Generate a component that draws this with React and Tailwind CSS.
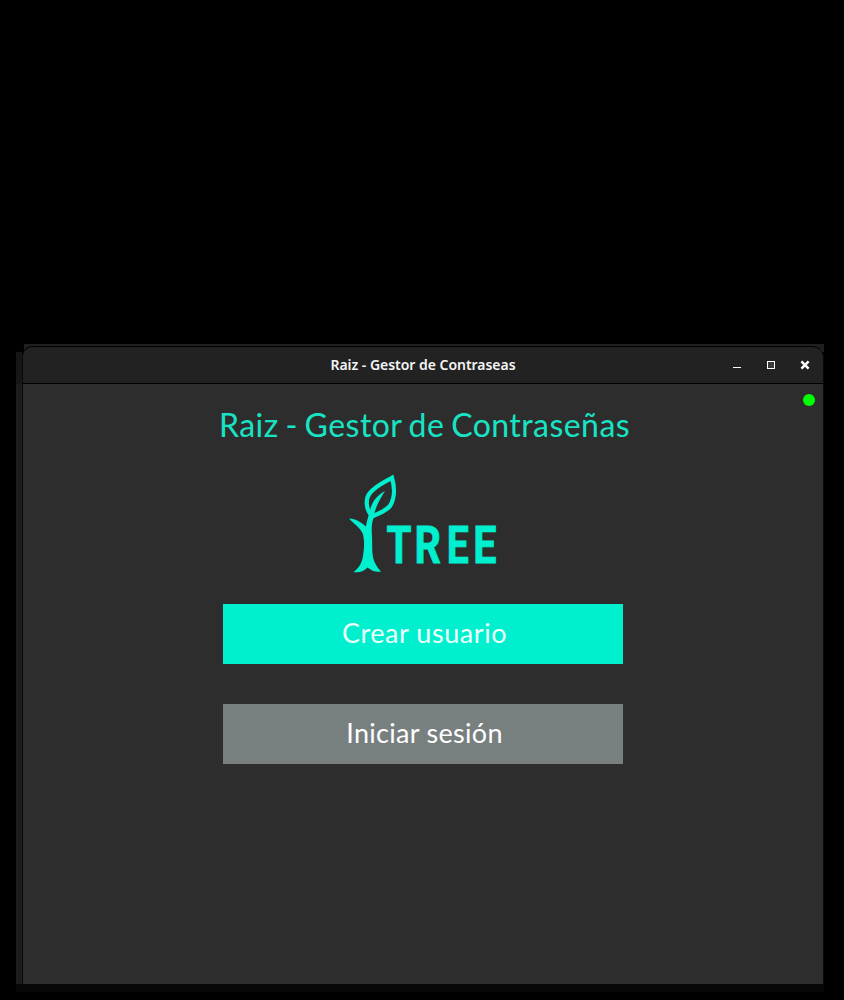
import React from "react";

function WindowControls() {
  return (
    <svg className="h-9 w-[88px] shrink-0" viewBox="0 0 88 36" shapeRendering="crispEdges" aria-hidden="true">
      <rect x="1" y="20" width="8" height="1" fill="#fff" />
      <rect x="35.5" y="14.5" width="7" height="7" fill="#3a3a3a" stroke="#fff" />
      <path d="M69.400 14.400L76.600 21.600M76.600 14.400L69.400 21.600" stroke="#fff" strokeWidth="2.5" shapeRendering="auto" />
    </svg>
  );
}

function TitleBar() {
  return (
    <header className="grid h-[38px] grid-cols-[1fr_auto_1fr] items-center rounded-t-[10px] border-y border-l border-y-black border-l-[#090909] bg-[#222222]">
      <span />
      <h1 className="whitespace-nowrap font-['Noto_Sans',sans-serif] text-[14px] font-semibold leading-9 tracking-[-0.03px] text-[#f4f4f4]">
        Raiz - Gestor de Contraseas
      </h1>
      <div className="flex justify-end pr-[3px]">
        <WindowControls />
      </div>
    </header>
  );
}

function TreeLogo() {
  return (
    <svg className="h-[115px] w-[170px]" viewBox="0 0 170 115" role="img" aria-label="Tree">
      <g fill="#00f0cf">
        <path d="M9 53.500C16 53.500 21 57.500 26 61.500C26.500 57 28 53 29 49L34.500 51C31.500 57 31.500 63 32 71C32.500 83 31.500 91 35 98C36.500 101 38.500 104 41 106.500C36 107.500 32 106 27.500 102.500C24 106 20 108 13.500 107C19 103 22 98 23 91C24.500 82 24.500 74 22.500 68C19.500 62 14 59 9 53.500Z" />
        <path d="M45 26C34 32 31 40 29.500 48L34 50C35.500 42 40 34 45 26Z" />
      </g>
      <path d="M31 50C25.500 43 25.500 33 30 28C36 20.500 44 17.500 52 12.800C55 23 54.500 34 50 41C45 47 38 48 32.500 51.500" fill="none" stroke="#00f0cf" strokeWidth="4.300" strokeLinejoin="miter" />
      <g fill="#00f0cf" stroke="#00f0cf" strokeWidth="0.8" className="font-['Roboto',sans-serif] text-[51px] font-bold" transform="translate(0 97.600)">
        <text x="0" y="0" transform="translate(46.500 0) scale(0.79 1)">T</text>
        <text x="0" y="0" transform="translate(74.500 0) scale(0.81 1)">R</text>
        <text x="0" y="0" transform="translate(106.700 0) scale(0.77 1)">E</text>
        <text x="0" y="0" transform="translate(133.300 0) scale(0.81 1)">E</text>
      </g>
    </svg>
  );
}

export default function App() {
  return (
    <main className="h-[1000px] w-[844px] bg-black pl-4 pr-5 pt-[344px]">
      <div className="flex h-[648px] flex-col">
        <div className="ml-2 h-2 shrink-0 bg-[#202020]" />
        <div className="flex h-[632px] shrink-0">
          <div className="flex w-1.5 shrink-0 flex-col">
            <div className="h-8 bg-[#161616]" />
            <div className="flex-1 bg-[#1d1d1d]" />
          </div>
          <div className="-mt-1.5 flex h-[638px] w-[801px] flex-col">
            <TitleBar />
            <section className="relative flex flex-1 flex-col items-center border-l border-[#090909] bg-[#2d2d2d]">
              <span className="absolute right-2 top-[10px] size-3 rounded-full bg-[#00ff00]" />
              <h2 className="mt-[21px] h-10 whitespace-nowrap pl-[3px] font-['Lato',sans-serif] text-[32px] leading-10 tracking-[0.45px] text-[#18e4c5] [word-spacing:-1.8px]">
                Raiz - Gestor de Contraseñas
              </h2>
              <div className="mt-5 pl-1">
                <TreeLogo />
              </div>
              <button className="mt-6 h-[60px] w-[400px] bg-[#00f0cf] pb-0.5 pl-[3px] font-['Lato',sans-serif] text-[27px] tracking-[0.55px] text-[#ecfffc]">
                Crear usuario
              </button>
              <button className="mt-10 h-[60px] w-[400px] bg-[#78807f] pb-0.5 pl-[3px] font-['Lato',sans-serif] text-[27px] tracking-[0.3px] text-white">
                Iniciar sesión
              </button>
            </section>
          </div>
          <div className="w-px bg-[#080808]" />
        </div>
        <div className="h-2 shrink-0 bg-[#070707]" />
      </div>
    </main>
  );
}
